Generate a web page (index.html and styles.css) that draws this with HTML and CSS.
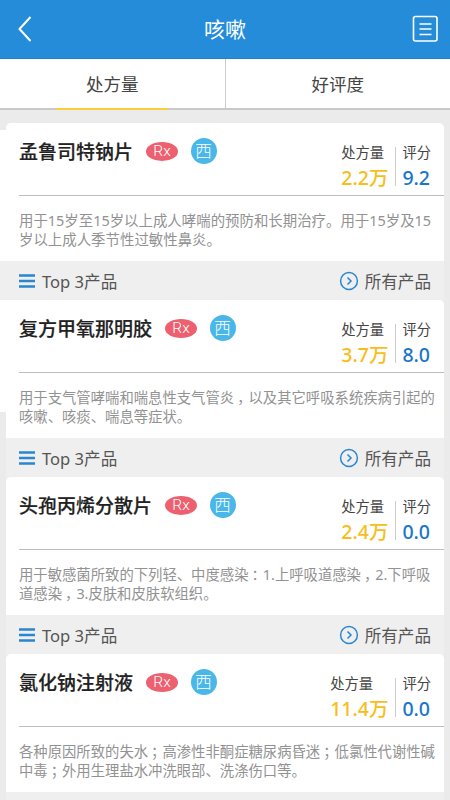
FILE: index.html
```html
<!DOCTYPE html>
<html lang="zh-CN">
<head>
<meta charset="utf-8">
<title>咳嗽</title>
<link rel="stylesheet" href="styles.css">
</head>
<body>
<header class="bar">
  <svg class="back" width="16" height="28" viewBox="0 0 16 28"><path d="M13.500 2L2.500 14L13.500 26"/></svg>
  <h1>咳嗽</h1>
  <svg class="menu" width="26" height="28" viewBox="0 0 26 28"><rect x="1.500" y="1.500" width="23.500" height="24.500" rx="2"/><path d="M7.500 9H19.500M7.500 14H19.500M7.500 19.500H19.500"/></svg>
</header>
<nav class="tabs"><a class="tab active">处方量</a><a class="tab">好评度</a></nav>
<main class="list">
  <section class="item wide-left">
    <article class="card">
      <div class="head"><h2>孟鲁司特钠片</h2><span class="rx">Rx</span><span class="west">西</span>
        <dl class="stat count"><dt>处方量</dt><dd>2.2万</dd></dl><dl class="stat score"><dt>评分</dt><dd>9.2</dd></dl></div>
      <p class="digits">用于15岁至15岁以上成人哮喘的预防和长期治疗。用于15岁及15<br>岁以上成人季节性过敏性鼻炎。</p>
    </article>
    <footer><svg width="16" height="14" viewBox="0 0 16 14"><path class="lines" d="M0 1.500H16M0 7H16M0 12.500H16"/></svg><span>Top 3产品</span><a><svg width="20" height="20" viewBox="0 0 20 20"><circle cx="10" cy="10" r="8.400"/><path d="M8.500 6.500L12 10L8.500 13.500"/></svg><b>所有产品</b></a></footer>
  </section>
  <section class="item part-left">
    <article class="card">
      <div class="head"><h2>复方甲氧那明胶</h2><span class="rx">Rx</span><span class="west">西</span>
        <dl class="stat count"><dt>处方量</dt><dd>3.7万</dd></dl><dl class="stat score"><dt>评分</dt><dd>8.0</dd></dl></div>
      <p>用于支气管哮喘和喘息性支气管炎<i>，</i>以及其它呼吸系统疾病引起的<br>咳嗽、咳痰、喘息等症状。</p>
    </article>
    <footer><svg width="16" height="14" viewBox="0 0 16 14"><path class="lines" d="M0 1.500H16M0 7H16M0 12.500H16"/></svg><span>Top 3产品</span><a><svg width="20" height="20" viewBox="0 0 20 20"><circle cx="10" cy="10" r="8.400"/><path d="M8.500 6.500L12 10L8.500 13.500"/></svg><b>所有产品</b></a></footer>
  </section>
  <section class="item">
    <article class="card">
      <div class="head"><h2>头孢丙烯分散片</h2><span class="rx">Rx</span><span class="west">西</span>
        <dl class="stat count"><dt>处方量</dt><dd>2.4万</dd></dl><dl class="stat score"><dt>评分</dt><dd>0.0</dd></dl></div>
      <p>用于敏感菌所致的下列轻、中度感染<i>：</i>1.上呼吸道感染<i>，</i>2.下呼吸<br>道感染<i>，</i>3.皮肤和皮肤软组织。</p>
    </article>
    <footer><svg width="16" height="14" viewBox="0 0 16 14"><path class="lines" d="M0 1.500H16M0 7H16M0 12.500H16"/></svg><span>Top 3产品</span><a><svg width="20" height="20" viewBox="0 0 20 20"><circle cx="10" cy="10" r="8.400"/><path d="M8.500 6.500L12 10L8.500 13.500"/></svg><b>所有产品</b></a></footer>
  </section>
  <section class="item">
    <article class="card">
      <div class="head"><h2>氯化钠注射液</h2><span class="rx">Rx</span><span class="west">西</span>
        <dl class="stat count"><dt>处方量</dt><dd>11.4万</dd></dl><dl class="stat score"><dt>评分</dt><dd>0.0</dd></dl></div>
      <p>各种原因所致的失水<i>；</i>高渗性非酮症糖尿病昏迷<i>；</i>低氯性代谢性碱<br>中毒<i>；</i>外用生理盐水冲洗眼部、洗涤伤口等。</p>
    </article>
  </section>
</main>
</body>
</html>
```
FILE: styles.css
```css
* { box-sizing: border-box; }
body { margin: 0; height: 800px; overflow: hidden; background: #ebebeb; font-family: "Noto Sans", "Noto Sans CJK SC", sans-serif; color: #444; }
h1, h2, p, dl, dd { margin: 0; }
svg { fill: none; stroke: #2a86cf; flex: none; display: block; }
.bar { height: 59px; background: #258cda; border-bottom: 1px solid #2282c8; display: flex; justify-content: space-between; align-items: center; padding: 0 12px 0 17px; }
.bar svg { stroke: #fff; stroke-width: 1.600; }
.bar .back { stroke-width: 2; margin-right: 5px; }
.bar h1 { font-size: 21px; line-height: 30px; font-weight: 400; color: #fff; }
.tabs { height: 51px; display: flex; background: #fff; border-bottom: 2px solid #c9c9c9; }
.tab { flex: 1; height: 51px; display: flex; justify-content: center; font-size: 17.500px; line-height: 50px; }
.tab + .tab { border-left: 1px solid #ccc; height: 49px; }
.tab.active::after { content: ""; position: absolute; left: 56px; top: 108px; width: 112px; height: 2px; background: #f9cf3c; }
.list { padding-top: 13px; }
.item { height: 177px; background: linear-gradient(90deg, #ebebeb 6px, #efefef 6px 444px, #ebebeb 444px); }
.card { height: 138px; margin: 0 6px; background: #fff; border-radius: 5px 5px 0 0; }
.wide-left { background: linear-gradient(#fff, #fff) 0 7px / 12px 131px no-repeat, linear-gradient(#efefef, #efefef) 0 138px / 444px 39px no-repeat, #ebebeb; }
.part-left { background: linear-gradient(#fff, #fff) 0 0 / 12px 112px no-repeat, linear-gradient(90deg, #ebebeb 6px, #efefef 6px 444px, #ebebeb 444px); }
.head { height: 73px; margin-left: 13px; padding-right: 13px; border-bottom: 1px solid #bdbdbd; display: flex; align-items: flex-start; }
h2 { font-size: 19px; line-height: 28px; font-weight: 500; color: #222; padding-top: 15px; -webkit-text-stroke: .2px #222; }
.rx { width: 32px; height: 19px; margin: 19px 0 0 13px; border-radius: 50%; background: #ec606f; color: #fff; font: 300 15.500px/19px Roboto, sans-serif; text-align: center; }
.west { width: 26px; height: 26px; margin: 15px 0 0 12.500px; border-radius: 50%; background: #49b7e7; color: #fff; font-size: 17px; line-height: 25px; text-align: center; font-weight: 300; }
.stat { margin-top: 20px; height: 44px; }
.count { margin-left: auto; }
.stat dt { font-size: 14.300px; line-height: 20px; white-space: nowrap; }
.stat dd { font-size: 19.500px; line-height: 29px; font-weight: 500; white-space: nowrap; }
.count dd { color: #f9bd18; }
.score { margin-left: 7px; margin-top: 24px; border-left: 1px solid #ccc; height: 39px; padding-left: 6px; }
.score dt { margin-top: -4px; }
.score dd { color: #1976c9; }
.card p { padding: 16px 0 0 13px; font-size: 14.350px; line-height: 18.500px; color: #929292; white-space: nowrap; }
.card .digits { font-size: 14.430px; }
.card i { font-style: normal; display: inline-block; width: 1em; padding-left: 3px; font-feature-settings: "halt"; }
footer { height: 39px; display: flex; align-items: center; padding: 0 19px; font-size: 16.600px; line-height: 24px; color: #555; }
footer span { margin-left: 7px; padding-top: 2px; }
footer b { font-weight: 400; padding-top: 2px; }
footer a { margin-left: auto; display: flex; align-items: center; gap: 6px; }
footer svg { stroke-width: 1.500; }
.lines { stroke-width: 2.400; }
```
